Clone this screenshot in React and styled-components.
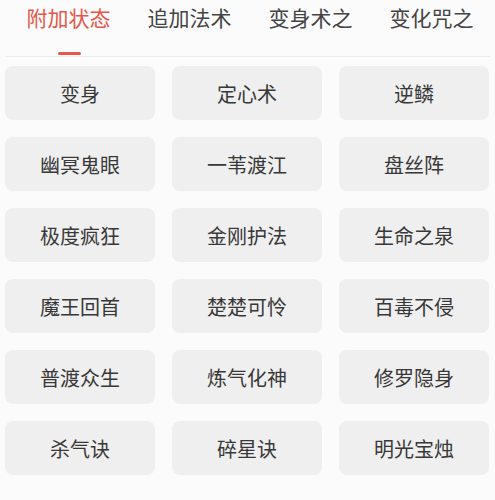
import React, { useState } from "react";
import styled, { createGlobalStyle } from "styled-components";

const tabs = ["附加状态", "追加法术", "变身术之", "变化咒之"];

const skills = [
  "变身", "定心术", "逆鳞",
  "幽冥鬼眼", "一苇渡江", "盘丝阵",
  "极度疯狂", "金刚护法", "生命之泉",
  "魔王回首", "楚楚可怜", "百毒不侵",
  "普渡众生", "炼气化神", "修罗隐身",
  "杀气诀", "碎星诀", "明光宝烛",
];

const GlobalStyle = createGlobalStyle`
  html, body {
    margin: 0;
    padding: 0;
    background: #fbfbfb;
    font-family: "Noto Sans CJK SC", "Noto Sans", sans-serif;
  }
`;

const App = () => {
  const [active, setActive] = useState(0);
  return (
    <>
      <GlobalStyle />
      <Page>
        <TabBar>
          {tabs.map((t, i) => (
            <Tab key={t} $active={i === active} onClick={() => setActive(i)}>
              {t}
              {i === active && <Indicator />}
            </Tab>
          ))}
        </TabBar>
        <Grid>
          {skills.map((s) => (
            <Card key={s}>{s}</Card>
          ))}
        </Grid>
      </Page>
    </>
  );
};

const Page = styled.div`
  width: 495px;
  height: 500px;
  background: #fbfbfb;
  overflow: hidden;
`;

const TabBar = styled.div`
  display: flex;
  height: 57px;
  margin: 0 5px;
  padding-left: 3px;
  border-bottom: 1px solid #ececec;
  box-sizing: border-box;
`;

const Tab = styled.div`
  position: relative;
  width: 121px;
  flex-shrink: 0;
  text-align: center;
  font-size: 21px;
  line-height: 34px;
  color: ${(p) => (p.$active ? "#e5574b" : "#444444")};
  cursor: pointer;
`;

const Indicator = styled.span`
  position: absolute;
  left: 50%;
  top: 52px;
  width: 23px;
  height: 3px;
  margin-left: -11px;
  border-radius: 2px;
  background: #e5574b;
`;

const Grid = styled.div`
  display: grid;
  grid-template-columns: repeat(3, 150px);
  grid-auto-rows: 54px;
  column-gap: 17px;
  row-gap: 17px;
  padding: 9px 0 0 5px;
`;

const Card = styled.div`
  display: flex;
  align-items: center;
  justify-content: center;
  background: #efefef;
  border-radius: 8px;
  font-size: 20px;
  color: #383838;
`;

export default App;
